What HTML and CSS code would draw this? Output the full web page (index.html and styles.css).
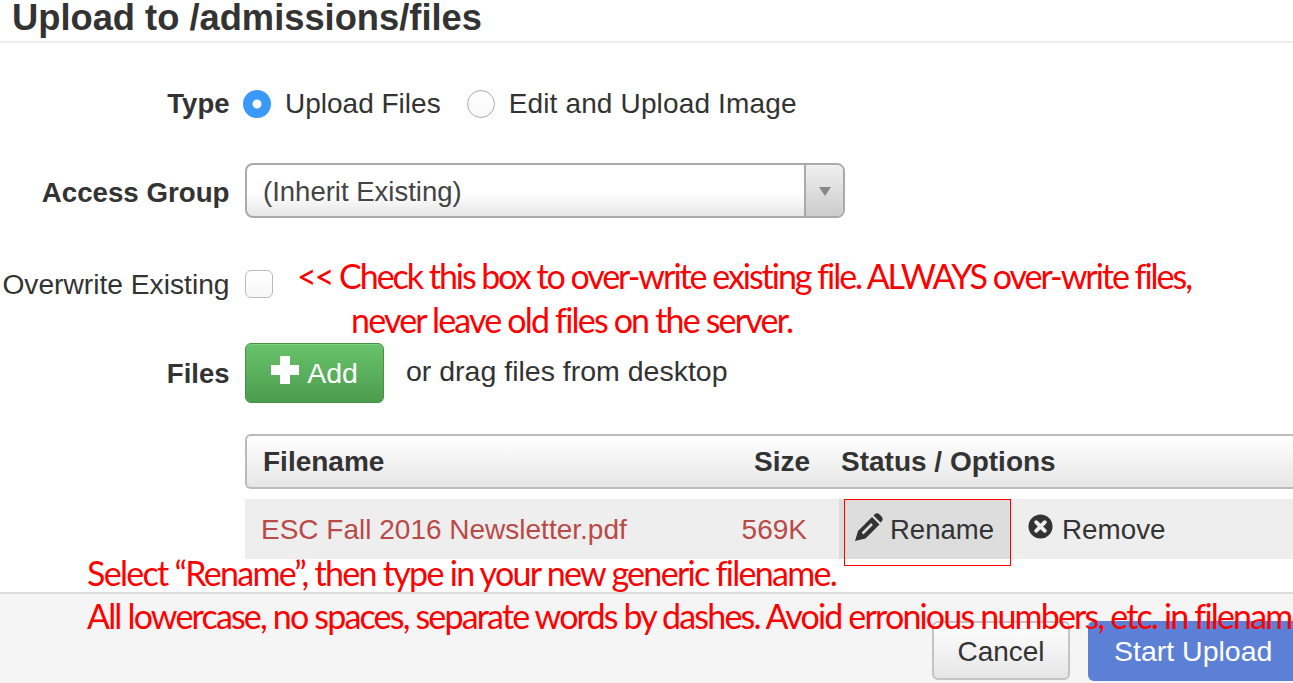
FILE: index.html
```html
<!DOCTYPE html>
<html lang="en">
<head>
<meta charset="utf-8">
<title>Upload</title>
<link rel="stylesheet" href="styles.css">
</head>
<body>
<div class="page">
  <header class="head"><h1>Upload to /admissions/files</h1></header>
  <main class="form">
    <div class="row row-type">
      <label class="lab strong">Type</label>
      <div class="ctl radios">
        <span class="radio on"></span><span class="opt">Upload Files</span>
        <span class="radio"></span><span class="opt wide">Edit and Upload Image</span>
      </div>
    </div>
    <div class="row row-group">
      <label class="lab strong group-lab">Access Group</label>
      <div class="select"><span class="sel-text">(Inherit Existing)</span><span class="sel-btn"><span class="tri"></span></span></div>
    </div>
    <div class="row row-over">
      <label class="lab over-lab">Overwrite Existing</label>
      <span class="check"></span>
    </div>
    <div class="row row-files">
      <label class="lab strong files-lab">Files</label>
      <button class="add"><svg class="plus" viewBox="0 0 28 28"><path d="M9 0h10v9h9v10h-9v9H9v-9H0V9h9z"/></svg>Add</button>
      <span class="drag">or drag files from desktop</span>
    </div>
    <div class="table">
      <div class="thead">
        <span class="c-name">Filename</span><span class="c-size">Size</span><span class="c-status">Status / Options</span>
      </div>
      <div class="tbody">
        <span class="c-name fn">ESC Fall 2016 Newsletter.pdf</span><span class="c-size fs">569K</span>
        <span class="rename">
          <svg class="ico-pen" viewBox="0 0 28 28"><path d="M0 28 3 18 17 4l7.500 7.500L10.500 25.500z"/><path d="M18.500 2.500l1-1a3.600 3.600 0 0 1 5 0l2 2a3.600 3.600 0 0 1 0 5l-1 1z"/><path class="slot" d="M7.500 20.500 17 11"/></svg>Rename
        </span>
        <span class="remove">
          <svg class="ico-x" viewBox="0 0 26 26"><circle cx="13" cy="13" r="12.500"/><path class="x" d="M8.500 8.500l9 9M17.500 8.500l-9 9"/></svg>Remove
        </span>
      </div>
    </div>
  </main>
  <footer class="foot">
    <button class="btn cancel">Cancel</button>
    <button class="btn start">Start Upload</button>
  </footer>
  <p class="note n1">&lt;&lt; Check this box to over-write existing file. ALWAYS over-write files,</p>
  <p class="note n2">never leave old files on the server.</p>
  <p class="note n3">Select “Rename”, then type in your new generic filename.</p>
  <p class="note n4">All lowercase, no spaces, separate words by dashes. Avoid erronious numbers, etc. in filenames.</p>
  <span class="redbox"></span>
</div>
</body>
</html>
```

FILE: styles.css
```css
* { box-sizing: border-box; }
html, body { margin: 0; height: 100%; overflow: hidden; background: #fff; }
body { font-family: "Liberation Sans", Arial, sans-serif; font-size: 28px; color: #333; }
.page { position: relative; width: 1293px; height: 683px; overflow: hidden; display: flex; flex-direction: column; }

.head { height: 43px; border-bottom: 2px solid #eee; padding-left: 12px; }
h1 { margin: 0; font-size: 36.300px; line-height: 35px; font-weight: 700; color: #333; white-space: nowrap; }

.form { flex: 1; display: flex; flex-direction: column; }
.row { display: flex; align-items: center; }
.lab { width: 230px; padding-right: 0.500px; flex: none; text-align: right; white-space: nowrap; }
.strong { font-weight: 700; font-size: 27.500px; }
.group-lab { font-size: 27.700px; padding-top: 4px; }
.over-lab { font-size: 28.200px; }
.files-lab { padding-top: 2px; }

.row-type { height: 32px; margin-top: 45px; }
.radios { display: flex; align-items: center; margin-left: 13px; }
.radio { width: 28px; height: 28px; border-radius: 50%; border: 1px solid #aaa; background: linear-gradient(#fff, #f8f8f8); flex: none; }
.radio.on { border: 0; background: radial-gradient(circle, #fff 0 4px, #3b99fc 5px); }
.opt { margin-left: 14px; margin-right: 26px; white-space: nowrap; }
.wide { letter-spacing: 0.150px; }

.row-group { height: 55px; margin-top: 43px; }
.select { width: 600px; height: 55px; margin-left: 15px; border: 2px solid #aaa; border-radius: 8px; display: flex; background: linear-gradient(#fff 55%, #e6e6e6); }
.sel-text { flex: 1; padding-left: 16px; line-height: 53px; color: #444; font-size: 27.500px; }
.sel-btn { width: 39px; border-left: 2px solid #aaa; border-radius: 0 6px 6px 0; background: linear-gradient(#f0f0f0, #ccc); display: flex; justify-content: center; padding-top: 22px; }
.tri { width: 0; height: 0; border: 6px solid transparent; border-top: 9px solid #888; border-bottom: 0; }

.row-over { height: 28px; margin-top: 52px; }
.check { width: 28px; height: 28px; margin-left: 15px; border: 1px solid #bbb; border-radius: 6px; background: linear-gradient(#fff, #f7f7f7); }

.row-files { height: 60px; margin-top: 45px; }
.add { width: 139px; height: 60px; margin-left: 15px; padding: 0; border: 1px solid #479047; border-radius: 6px; background: linear-gradient(#69c36b, #4c9c4e); box-shadow: inset 0 1px 0 #7ad07c; color: #fff; font: 28.500px "Liberation Sans", Arial, sans-serif; display: flex; align-items: center; justify-content: center; }
.plus { width: 28px; height: 28px; fill: #fff; margin-right: 8px; position: relative; bottom: 3px; }
.drag { margin-left: 22px; position: relative; bottom: 2px; font-size: 28.500px; }

.table { margin-top: 31px; margin-left: 245px; }
.thead { height: 55px; border: 2px solid #bbb; border-right: 0; border-radius: 6px 0 0 6px; background: linear-gradient(#fff, #e6e6e6); display: flex; align-items: center; font-weight: 700; }
.thead .c-name { width: 507px; padding-left: 16px; }
.thead .c-size { width: 51px; text-align: right; }
.thead .c-status { margin-left: 36px; }
.tbody { height: 60px; margin-top: 10px; background: #eee; display: flex; align-items: center; }
.tbody .c-name { width: 495px; padding-left: 16px; }
.fn, .fs { color: #b94a48; padding-top: 2px; }
.tbody .fs { width: 67px; text-align: right; }
.rename { width: 171px; height: 60px; margin-left: 32px; background: #ddd; display: flex; align-items: center; padding: 2px 0 0 16px; font-size: 27.500px; }
.ico-pen { width: 28px; height: 28px; fill: #333; margin-right: 7px; position: relative; bottom: 3px; }
.ico-pen .slot { fill: none; stroke: #ddd; stroke-width: 2.500; }
.remove { display: flex; align-items: center; margin-left: 18px; padding-top: 2px; font-size: 27.800px; }
.ico-x { width: 25px; height: 25px; margin-right: 9px; position: relative; bottom: 4px; }
.ico-x circle { fill: #333; }
.ico-x .x { fill: none; stroke: #eee; stroke-width: 4; stroke-linecap: round; }

.foot { height: 91px; flex: none; border-top: 2px solid #ddd; background: #f5f5f5; display: flex; align-items: flex-end; padding: 0 0 2px 932px; }
.btn { padding: 0; font: 28px "Liberation Sans", Arial, sans-serif; border-radius: 6px; flex: none; }
.cancel { width: 138px; margin-right: 18px; height: 59px; margin-bottom: 1px; padding-top: 2px; border: 2px solid #c4c4c4; background: linear-gradient(#fff, #e6e6e6); color: #333; }
.start { width: 210px; height: 60px; border: 0; background: #5b80d6; color: #fff; text-align: left; padding-left: 26px; font-size: 28.500px; }

.note { position: absolute; margin: 0; white-space: nowrap; font-family: Lato, "Open Sans", sans-serif; font-size: 34px; line-height: 40px; letter-spacing: -1.820px; color: #f00; }
.n1 { left: 297px; top: 256px; letter-spacing: -2.030px; }
.n2 { left: 351px; top: 300px; }
.n3 { left: 87px; top: 553px; letter-spacing: -1.700px; }
.n4 { left: 87px; top: 596px; }
.redbox { position: absolute; left: 844px; top: 499px; width: 167px; height: 67px; border: 1px solid #f00; }
```
